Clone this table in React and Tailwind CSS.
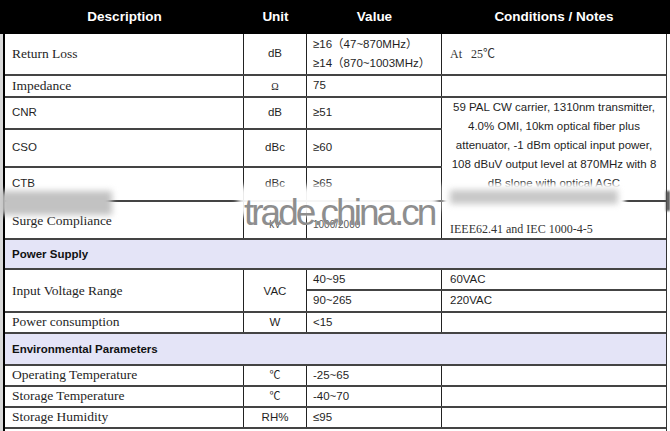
const serif = "font-['Liberation_Serif','Noto_Sans_CJK_SC',serif] text-[13.5px]";

function Desc({ children, serifFont = true, extra = "" }) {
  return (
    <div
      className={`w-[239px] shrink-0 border-r border-[#222] pl-[7px] flex items-center ${
        serifFont ? serif : ""
      } ${extra}`}
    >
      {children}
    </div>
  );
}

function Unit({ children, extra = "" }) {
  return (
    <div className={`w-[63px] shrink-0 border-r border-[#222] flex items-center justify-center ${extra}`}>
      {children}
    </div>
  );
}

function Val({ children, extra = "" }) {
  return (
    <div className={`w-[135px] shrink-0 border-r border-[#222] pl-[6px] flex items-center ${extra}`}>
      {children}
    </div>
  );
}

function Cond({ children, extra = "" }) {
  return <div className={`flex-1 pl-[8px] flex items-center ${extra}`}>{children}</div>;
}

function Section({ title, h }) {
  return (
    <div className={`${h} border-b-2 border-[#444] bg-[#e4e4f7] flex items-center pl-[7px] pt-[2px] font-bold text-[11.5px] text-[#111]`}>
      {title}
    </div>
  );
}

export default function App() {
  return (
    <div className="w-[670px] h-[431px] bg-white overflow-hidden relative font-['Liberation_Sans',Arial,'Noto_Sans_CJK_SC',sans-serif] text-[11.5px] text-[#1f1f1f]">
      <div className="h-[34px] bg-black text-white font-bold text-[13.5px] flex pl-[5px]">
        <div className="w-[239px] flex items-center justify-center">Description</div>
        <div className="w-[63px] flex items-center justify-center">Unit</div>
        <div className="w-[135px] flex items-center justify-center">Value</div>
        <div className="w-[224px] flex items-center justify-center">Conditions / Notes</div>
      </div>

      <div className="flex">
        <div className="w-[3px] bg-[#d9d9d9]" />
        <div className="w-[664px] border-l-2 border-l-black border-r border-r-[#333] flex flex-col">
          {/* Return Loss */}
          <div className="flex h-[42px] border-b-2 border-[#444]">
            <Desc>Return Loss</Desc>
            <Unit>dB</Unit>
            <div className="w-[135px] shrink-0 border-r border-[#222] pl-[6px] flex flex-col justify-center leading-[19.5px]">
              <div>≥16（47~870MHz）</div>
              <div>≥14（870~1003MHz）</div>
            </div>
            <Cond extra="font-['Liberation_Serif','Noto_Sans_CJK_SC',serif] text-[12px] text-[#333]">At&nbsp;&nbsp;&nbsp;25℃</Cond>
          </div>

          {/* Impedance */}
          <div className="flex h-[22px] border-b-2 border-[#444]">
            <Desc>Impedance</Desc>
            <Unit extra="font-['Liberation_Serif',serif] text-[10px]">Ω</Unit>
            <Val>75</Val>
            <Cond />
          </div>

          {/* CNR / CSO / CTB group */}
          <div className="flex h-[104px] border-b-2 border-[#444]">
            <div className="flex flex-col w-[437px] shrink-0">
              <div className="flex h-[32px] border-b-2 border-[#444]">
                <Desc serifFont={false}>CNR</Desc>
                <Unit>dB</Unit>
                <Val>≥51</Val>
              </div>
              <div className="flex h-[38px] border-b-2 border-[#444]">
                <Desc serifFont={false}>CSO</Desc>
                <Unit>dBc</Unit>
                <Val>≥60</Val>
              </div>
              <div className="flex flex-1">
                <Desc serifFont={false}>CTB</Desc>
                <Unit>dBc</Unit>
                <Val>≥65</Val>
              </div>
            </div>
            <div className="flex-1 overflow-hidden text-center leading-[19px] px-[2px]">
              59 PAL CW carrier, 1310nm transmitter,
              <br />
              4.0% OMI, 10km optical fiber plus
              <br />
              attenuator, -1 dBm optical input power,
              <br />
              108 dBuV output level at 870MHz with 8
              <br />
              dB slope with optical AGC
            </div>
          </div>

          {/* Surge */}
          <div className="flex h-[38px] border-b-2 border-[#444]">
            <Desc extra="pt-[2px]">Surge Compliance</Desc>
            <Unit extra="pt-[8px] text-[10px] text-[#555]">kV</Unit>
            <Val extra="pt-[8px] text-[10px] text-[#555]">1000/2000</Val>
            <div className="flex-1 pl-[8px] pt-[19px] leading-[16px] font-['Liberation_Serif',serif] text-[12px] text-[#333]">
              IEEE62.41 and IEC 1000-4-5
            </div>
          </div>

          <Section title="Power Supply" h="h-[30px]" />

          {/* Input Voltage */}
          <div className="flex h-[43px] border-b-2 border-[#444]">
            <Desc extra="pt-[2px]">Input Voltage Range</Desc>
            <Unit extra="pt-[2px]">VAC</Unit>
            <div className="flex-1 flex flex-col">
              <div className="flex h-[21px] border-b-2 border-[#444]">
                <Val>40~95</Val>
                <Cond>60VAC</Cond>
              </div>
              <div className="flex flex-1">
                <Val>90~265</Val>
                <Cond>220VAC</Cond>
              </div>
            </div>
          </div>

          <div className="flex h-[21px] border-b-2 border-[#444]">
            <Desc>Power consumption</Desc>
            <Unit>W</Unit>
            <Val>&lt;15</Val>
            <Cond />
          </div>

          <Section title="Environmental Parameters" h="h-[32px]" />

          <div className="flex h-[21px] border-b-2 border-[#444]">
            <Desc>Operating Temperature</Desc>
            <Unit extra="font-['Liberation_Serif','Noto_Sans_CJK_SC',serif] text-[11px]">℃</Unit>
            <Val>-25~65</Val>
            <Cond />
          </div>
          <div className="flex h-[21px] border-b-2 border-[#444]">
            <Desc>Storage Temperature</Desc>
            <Unit extra="font-['Liberation_Serif','Noto_Sans_CJK_SC',serif] text-[11px]">℃</Unit>
            <Val>-40~70</Val>
            <Cond />
          </div>
          <div className="flex h-[21px] border-b-2 border-[#444]">
            <Desc>Storage Humidity</Desc>
            <Unit>RH%</Unit>
            <Val>≤95</Val>
            <Cond />
          </div>
          <div className="h-[6px]" />
        </div>
      </div>

      {/* watermark and blurred overlays */}
      <div className="absolute left-0 top-[191px] w-[112px] h-[24px] bg-[#c2c2c2] blur-[3px]" />
      <div className="absolute left-[238px] top-[186px] w-[200px] h-[30px] bg-white blur-[3px] opacity-95" />
      <div className="absolute left-[443px] top-[184px] w-[182px] h-[26px] bg-white blur-[2px]" />
      <div className="absolute left-[450px] top-[190px] w-[168px] h-[14px] bg-[#c8c8c8] blur-[3px]" />
      <div className="absolute left-[666px] top-[191px] w-[4px] h-[20px] bg-[#555] blur-[1px]" />
      <div className="absolute left-[244px] top-[194px] text-[37px] leading-none tracking-[-3px] text-[#8e8e8e] font-['Liberation_Sans',Arial,sans-serif]">
        trade.china.cn
      </div>
    </div>
  );
}
